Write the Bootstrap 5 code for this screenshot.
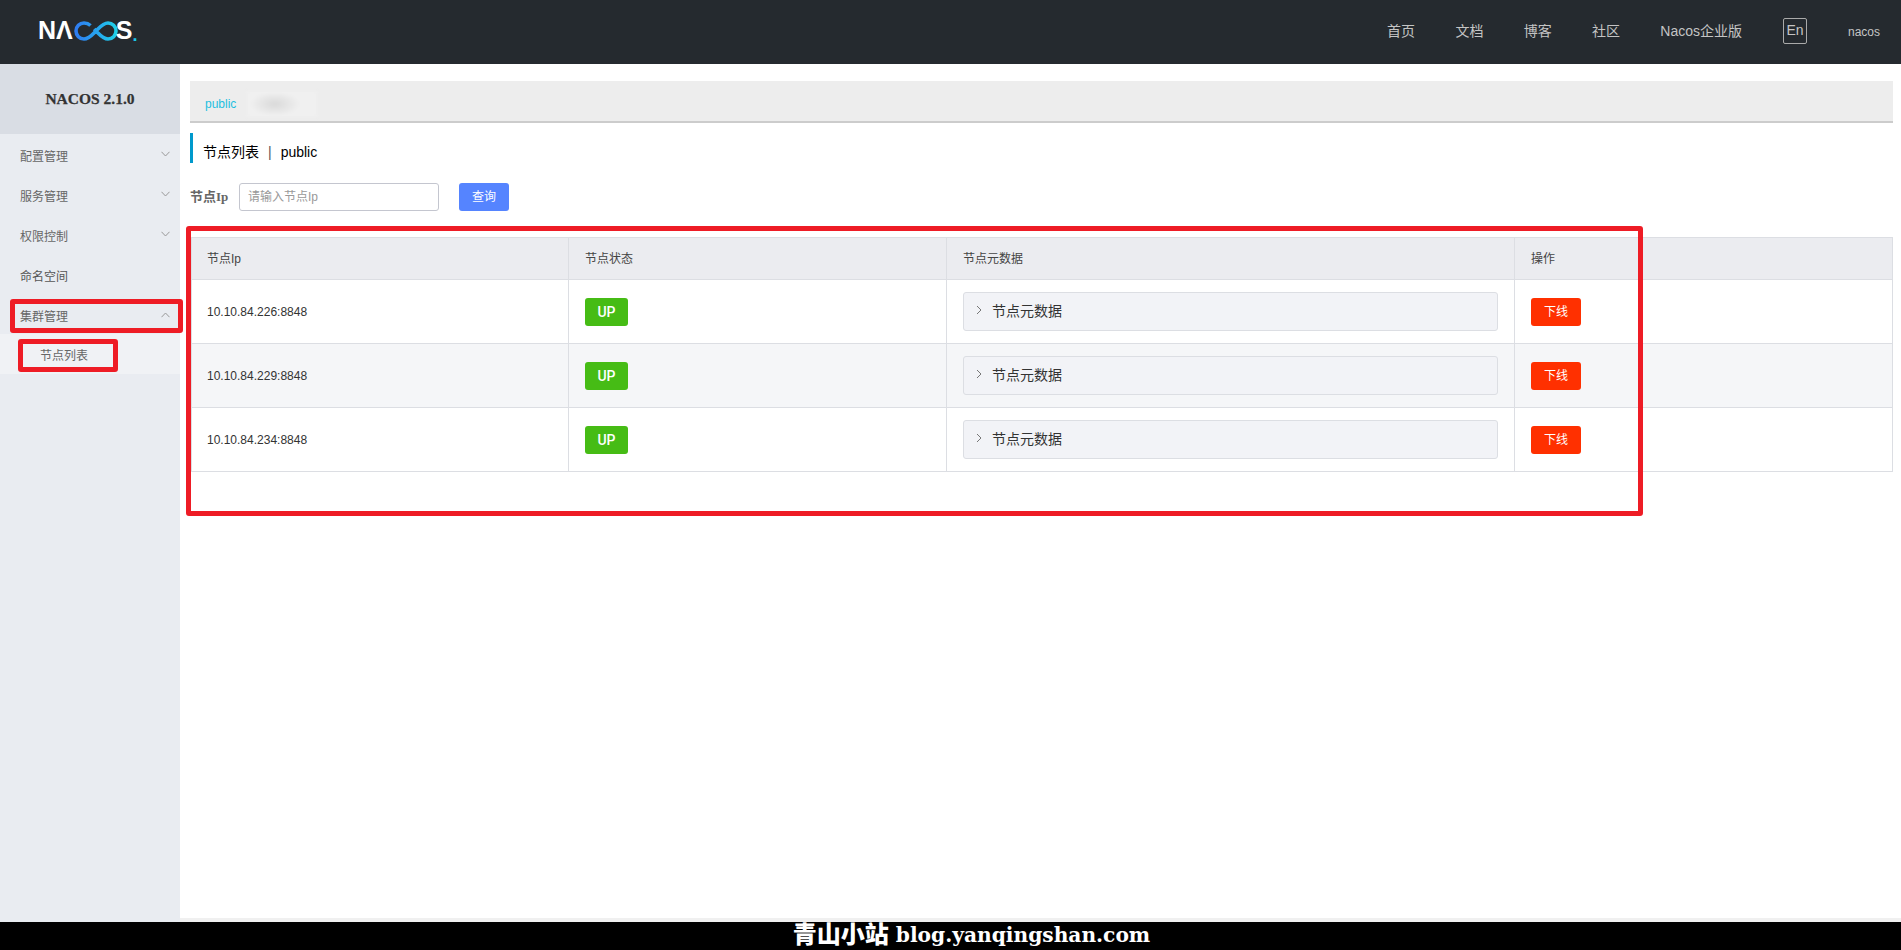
<!DOCTYPE html>
<html lang="zh">
<head>
<meta charset="utf-8">
<title>Nacos</title>
<link href="https://cdn.jsdelivr.net/npm/bootstrap@5.3.0/dist/css/bootstrap.min.css" rel="stylesheet">
<style>
html,body{height:100%;}
body{font-family:"Liberation Sans","Noto Sans CJK SC",sans-serif;font-size:12px;color:#333;overflow:hidden;position:relative;width:1901px;height:950px;background:#fff;}
.topbar{height:64px;background:#252a2f;color:#c8c8c8;padding-left:38px;padding-right:21px;flex:none;}
.logo-word{font-family:"Liberation Sans",sans-serif;font-size:25px;font-weight:700;color:#fff;line-height:1;}
.logo-dot{color:#1cc6e8;font-size:18px;font-weight:700;margin-left:0;margin-top:9px;line-height:1;}
.top-link{font-size:14px;color:#c4c4c4;text-decoration:none;line-height:20px;margin-right:40.300px;margin-top:-3px;}
.top-link.wide{margin-right:41px;}
.top-en{font-size:14px;border:1px solid #aaa;border-radius:2px;width:24px;height:26px;line-height:22px;text-align:center;margin-top:-3px;color:#c4c4c4;}
.top-user{font-size:12px;color:#c4c4c4;margin-left:41px;margin-top:0;}
.mid{flex:1 1 auto;min-height:0;}
.sidenav{width:180px;background:#e9ecf1;flex:none;}
.side-title{height:70px;background:#d9dde4;font-weight:700;color:#333;font-family:"Liberation Serif","Noto Sans CJK SC",serif;font-size:15.500px;-webkit-text-stroke:.25px #333;margin-bottom:3px;}
.side-item{height:40px;padding:0 10px 0 20px;color:#666;font-size:12px;}
.side-item.dark{color:#555;}
.side-item.tight{height:37px;padding-top:2px;}
.side-sub{height:40px;background:#f0f2f5;padding-left:40px;padding-top:4px;color:#666;font-size:12px;}
.chev{width:9px;height:6px;flex:none;margin-top:-6px;}
.chev.upc{margin-top:-4px;}
.content{flex:1 1 auto;min-width:0;padding:17px 8px 0 10px;position:relative;}
.tabstrip{height:42px;background:#ededed;border-bottom:2px solid #ccc;padding:13px 0 0 15px;}
.tab-pub{color:#1fbfe0;font-size:12px;line-height:20px;}
.blurry{width:70px;height:26px;margin-left:11px;margin-top:-3px;background:radial-gradient(ellipse 38% 48% at 40% 50%,#d9d9d9,#f0f0f0 95%);filter:blur(1.500px);}
.page-head{height:30px;margin-top:10px;border-left:3px solid #09c;padding-left:10px;font-size:14px;color:#000;line-height:38px;}
.page-head .sep{margin:0 9px;color:#555;}
.q-form{margin-top:20px;height:28px;}
.q-label{font-family:"Liberation Serif","Noto Sans CJK SC",serif;font-weight:700;font-size:13px;color:#666;width:49px;}
.q-input{width:200px;height:28px;border:1px solid #c4c6cf;border-radius:3px;padding:0 8px;font-size:12px;color:#999;line-height:26px;}
.q-btn{width:50px;height:28px;margin-left:20px;background:#5584ff;color:#fff;border-radius:3px;font-size:12px;line-height:29px;text-align:center;}
.tbl-wrap{margin-top:26px;margin-left:1px;}
table.node-tbl{table-layout:fixed;width:100%;margin:0;border-collapse:collapse;font-size:12px;color:#333;}
.node-tbl th,.node-tbl td{border:1px solid #dcdee3;padding:0 16px;vertical-align:middle;font-weight:400;background:transparent;box-shadow:none;color:#333;}
.node-tbl th:first-child,.node-tbl td:first-child{padding-left:15px;}
.node-tbl thead th{height:42px;background:#ebecf0;color:#444;}
.node-tbl tbody tr{height:64px;}
.node-tbl tbody tr.alt td{background:#f5f6f8;}
.up-btn{width:43px;height:28px;background:#46bc15;color:#fff;font-family:Roboto,sans-serif;font-size:14px;font-weight:500;border-radius:3px;line-height:28px;text-align:center;}
.off-btn{width:50px;height:28px;background:#ff3000;color:#fff;font-size:12px;border-radius:3px;line-height:29px;text-align:center;}
.meta-box{height:39px;background:#f2f3f7;border:1px solid #dcdee3;border-radius:3px;padding-left:12px;font-size:14px;color:#333;}
.meta-box svg{width:6px;height:10px;margin-right:10px;margin-top:-3px;}
.strip{position:absolute;left:180px;right:0;bottom:28px;height:4px;background:#f0f0f0;}
.footer-bar{height:28px;background:#000;color:#fff;flex:none;font-family:"DejaVu Serif","Liberation Serif",serif;font-weight:700;font-size:20.200px;line-height:26px;text-align:center;padding-left:42px;white-space:nowrap;}
.footer-cjk{font-family:"Noto Sans CJK SC",sans-serif;font-size:24px;font-weight:900;vertical-align:-1px;line-height:20px;}
.mark-box{position:absolute;border:5px solid #ee1c25;border-radius:3px;pointer-events:none;}
.mb1{left:10px;top:299px;width:173px;height:34px;}
.mb2{left:18px;top:339px;width:100px;height:33px;}
.mb3{left:186px;top:226px;width:1457px;height:290px;}
</style>
</head>
<body class="d-flex flex-column">
<header class="topbar d-flex align-items-center">
  <div class="d-flex align-items-center" style="margin-top:-3px">
    <span class="logo-word">NΛ</span>
    <svg width="44" height="20" viewBox="0 0 44 20" style="margin-left:1px"><defs><linearGradient id="lg" x1="0" x2="1" y1="0" y2="0"><stop offset="0" stop-color="#2f7cf0"/><stop offset=".55" stop-color="#26a7ef"/><stop offset="1" stop-color="#1ed0e8"/></linearGradient></defs><path d="M16.500 4.500C14.800 2.900 12.500 2 10 2 5.600 2 2 5.600 2 10s3.600 8 8 8c5 0 8-4 12-8s7-8 12-8c4.400 0 8 3.600 8 8s-3.600 8-8 8c-5 0-8-4-12-8l-1.800-2" fill="none" stroke="url(#lg)" stroke-width="3.600"/></svg>
    <span class="logo-word" style="margin-left:-2px">S</span>
    <span class="logo-dot">.</span>
  </div>
  <nav class="ms-auto d-flex align-items-center">
    <a class="top-link" href="#">首页</a>
    <a class="top-link" href="#">文档</a>
    <a class="top-link" href="#">博客</a>
    <a class="top-link" href="#">社区</a>
    <a class="top-link wide" href="#">Nacos企业版</a>
    <span class="top-en">En</span>
    <span class="top-user">nacos</span>
  </nav>
</header>
<div class="mid d-flex">
  <aside class="sidenav">
    <div class="side-title d-flex align-items-center justify-content-center">NACOS 2.1.0</div>
    <div class="side-item d-flex align-items-center justify-content-between"><span>配置管理</span><svg class="chev" viewBox="0 0 9 6"><path d="M.5.8 4.500 5 8.500.8" fill="none" stroke="#999" stroke-width="1"/></svg></div>
    <div class="side-item d-flex align-items-center justify-content-between"><span>服务管理</span><svg class="chev" viewBox="0 0 9 6"><path d="M.5.8 4.500 5 8.500.8" fill="none" stroke="#999" stroke-width="1"/></svg></div>
    <div class="side-item d-flex align-items-center justify-content-between"><span>权限控制</span><svg class="chev" viewBox="0 0 9 6"><path d="M.5.8 4.500 5 8.500.8" fill="none" stroke="#999" stroke-width="1"/></svg></div>
    <div class="side-item dark d-flex align-items-center"><span>命名空间</span></div>
    <div class="side-item tight d-flex align-items-center justify-content-between"><span>集群管理</span><svg class="chev upc" viewBox="0 0 9 6"><path d="M.5 5.200 4.500 1 8.500 5.200" fill="none" stroke="#999" stroke-width="1"/></svg></div>
    <div class="side-sub d-flex align-items-center"><span>节点列表</span></div>
  </aside>
  <main class="content">
    <div class="tabstrip d-flex"><span class="tab-pub">public</span><span class="blurry"></span></div>
    <div class="page-head">节点列表<span class="sep">|</span>public</div>
    <div class="q-form d-flex align-items-center">
      <span class="q-label">节点Ip</span>
      <div class="q-input">请输入节点Ip</div>
      <div class="q-btn">查询</div>
    </div>
    <div class="tbl-wrap">
      <table class="table node-tbl">
        <colgroup><col style="width:377px"><col style="width:378px"><col style="width:568px"><col></colgroup>
        <thead><tr><th>节点Ip</th><th>节点状态</th><th>节点元数据</th><th>操作</th></tr></thead>
        <tbody>
          <tr><td>10.10.84.226:8848</td><td><div class="up-btn">UP</div></td><td><div class="meta-box d-flex align-items-center"><svg viewBox="0 0 6 10"><path d="M1 1l4 4-4 4" fill="none" stroke="#777"/></svg>节点元数据</div></td><td><div class="off-btn">下线</div></td></tr>
          <tr class="alt"><td>10.10.84.229:8848</td><td><div class="up-btn">UP</div></td><td><div class="meta-box d-flex align-items-center"><svg viewBox="0 0 6 10"><path d="M1 1l4 4-4 4" fill="none" stroke="#777"/></svg>节点元数据</div></td><td><div class="off-btn">下线</div></td></tr>
          <tr><td>10.10.84.234:8848</td><td><div class="up-btn">UP</div></td><td><div class="meta-box d-flex align-items-center"><svg viewBox="0 0 6 10"><path d="M1 1l4 4-4 4" fill="none" stroke="#777"/></svg>节点元数据</div></td><td><div class="off-btn">下线</div></td></tr>
        </tbody>
      </table>
    </div>
  </main>
</div>
<div class="strip"></div>
<footer class="footer-bar"><span class="footer-cjk">青山小站</span> blog.yanqingshan.com</footer>
<div class="mark-box mb1"></div>
<div class="mark-box mb2"></div>
<div class="mark-box mb3"></div>
<script src="https://cdn.jsdelivr.net/npm/bootstrap@5.3.0/dist/js/bootstrap.bundle.min.js"></script>
</body>
</html>
